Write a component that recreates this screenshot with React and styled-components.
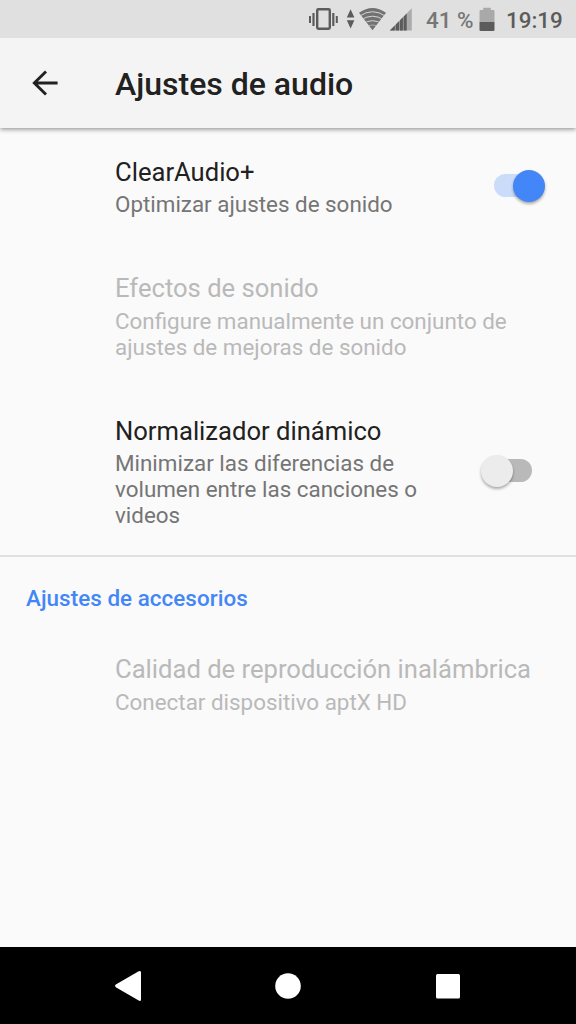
import React, { useState } from "react";
import styled, { createGlobalStyle } from "styled-components";

const GlobalStyle = createGlobalStyle`
  * {
    box-sizing: border-box;
  }

  body {
    margin: 0;
    font-family: Roboto, "Liberation Sans", sans-serif;
    background: #fafafa;
  }
`;

const Screen = styled.div`
  display: flex;
  flex-direction: column;
  width: 576px;
  height: 1024px;
  overflow: hidden;
  background: #fafafa;
`;

const StatusBar = styled.div`
  display: flex;
  flex: none;
  align-items: center;
  justify-content: flex-end;
  height: 38px;
  padding-right: 13px;
  background: #e0e0e0;
`;

const StatusIcons = styled.svg`
  flex: none;
  width: 106px;
  height: 38px;
`;

const BatteryIcon = styled.svg`
  flex: none;
  width: 16px;
  height: 38px;
  margin: 0 11px 0 6px;
`;

const StatusText = styled.span`
  width: ${props => props.$width};
  margin-left: ${props => props.$left || 0};
  color: ${props => props.$color};
  font-size: 22.4px;
  font-weight: 500;
  line-height: 26px;
  white-space: nowrap;
  padding-top: 1px;
`;

const AppBar = styled.header`
  display: flex;
  flex: none;
  align-items: center;
  height: 90px;
  padding-left: 25px;
  background: #f4f4f4;
  box-shadow: 0 1px 5px rgba(0, 0, 0, 0.48);
  clip-path: inset(0 0 -12px 0);
  z-index: 1;
`;

const BackButton = styled.button`
  display: flex;
  width: 90px;
  padding: 0;
  border: 0;
  background: none;
`;

const Title = styled.h1`
  margin: 1px 0 0;
  color: #212121;
  font-size: 32px;
  font-weight: 500;
  line-height: 38px;
`;

const List = styled.main`
  flex: 1;
  padding-top: 1px;
`;

const Row = styled.div`
  display: flex;
  align-items: center;
  height: ${props => props.$height}px;
  padding: 0 31px 0 115px;
`;

const RowText = styled.div`
  flex: 1;
`;

const RowTitle = styled.div`
  color: ${props => (props.$disabled ? "#b9b9b9" : "#212121")};
  font-size: 25.6px;
  line-height: 30px;
  white-space: nowrap;
`;

const Summary = styled.div`
  width: ${props => props.$width || 430}px;
  margin-top: ${props => (props.$disabled ? 5 : 4)}px;
  color: ${props => (props.$disabled ? "#b9b9b9" : "#757575")};
  font-size: 22.4px;
  line-height: 26px;
`;

const Divider = styled.div`
  height: 2px;
  margin-top: -1px;
  background: #e0e0e0;
`;

const Category = styled.h2`
  margin: 28px 0 16px 26px;
  color: #4286f8;
  font-size: 22.4px;
  font-weight: 500;
  line-height: 26px;
  letter-spacing: 0.05px;
`;

const Switch = styled.button`
  display: flex;
  flex: none;
  width: 64px;
  padding: 0 0 3px;
  border: 0;
  background: none;
`;

const Track = styled.span`
  display: flex;
  align-items: center;
  justify-content: ${props => (props.$on ? "flex-end" : "flex-start")};
  width: 38px;
  height: 23px;
  margin-left: 13px;
  border-radius: 12px;
  background: ${props => (props.$on ? "#cbdcfb" : "#b9b9b9")};
`;

const Thumb = styled.span`
  flex: none;
  width: 32px;
  height: 32px;
  margin: ${props => (props.$on ? "0 -13px 0 0" : "0 0 0 -13px")};
  border-radius: 50%;
  background: ${props => (props.$on ? "#4286f8" : "#ececec")};
  box-shadow: 0 2px 3px rgba(0, 0, 0, 0.32);
`;

const NavBar = styled.nav`
  display: flex;
  flex: none;
  align-items: center;
  justify-content: center;
  gap: 128px;
  height: 77px;
  background: #000;
`;

const NavButton = styled.button`
  display: flex;
  width: 32px;
  height: 32px;
  padding: 0;
  border: 0;
  background: none;
`;

function StatusBarIcons() {
  return (
    <StatusIcons viewBox="308 0 106 38">
      <g fill="#5b5b5b">
        <path d="M309 16h2v7h-2zM312.4 13h2.2v13h-2.2zM332.2 13h2.2v13h-2.2zM335.8 16h2v7h-2z" />
        <path d="M346.8 17.6L350.6 9.3 354.4 17.6zM346.8 20.2h7.6L350.6 28.6z" />
      </g>
      <rect x="317.2" y="9.2" width="12.6" height="19.6" rx="1.2" fill="none" stroke="#5b5b5b" strokeWidth="2.4" />
      <clipPath id="wifi">
        <path d="M359 12.8Q372.5 3.2 386 12.8L372.5 30.2z" />
      </clipPath>
      <g clipPath="url(#wifi)">
        <path d="M359 6h27v25h-27z" fill="#727272" />
        <g fill="none" stroke="#d6d6d6" strokeWidth="1">
          <path d="M359.5 16.2Q372.5 7.2 385.5 16.2" />
          <path d="M361 20Q372.5 12.4 384 20" />
          <path d="M363 23.8Q372.5 17.6 382 23.8" />
          <path d="M365 27.4Q372.5 22.6 380 27.4" strokeWidth=".6" />
        </g>
      </g>
      <path d="M407 13.1L411.8 8.2v22.2H407z" fill="#ababab" />
      <path d="M389.8 30.4L407 13.2v17.2z" fill="#999" />
      <path d="M389.8 30.4l5-5v5zM395.8 24.4l3.2-3.2v9.2h-3.2zM400 20.2l2.9-2.9v13.1H400zM403.8 16.4l2.8-2.8v16.8h-2.8z" fill="#5b5b5b" />
    </StatusIcons>
  );
}

function Setting({ title, summary, height, width, disabled, children }) {
  return (
    <Row $height={height}>
      <RowText>
        <RowTitle $disabled={disabled}>{title}</RowTitle>
        <Summary $disabled={disabled} $width={width}>{summary}</Summary>
      </RowText>
      {children}
    </Row>
  );
}

function Toggle({ initial, label }) {
  const [on, setOn] = useState(initial);

  return (
    <Switch role="switch" aria-checked={on} aria-label={label} onClick={() => setOn(!on)}>
      <Track $on={on}>
        <Thumb $on={on} />
      </Track>
    </Switch>
  );
}

export default function App() {
  return (
    <Screen>
      <GlobalStyle />
      <StatusBar>
        <StatusBarIcons />
        <StatusText $width="47px" $left="12px" $color="#767676">41 %</StatusText>
        <BatteryIcon viewBox="0 0 16 38">
          <path d="M0.5 11.2q0-1.3 1.3-1.3h2.4V7.8h7.6v2.1h2.4q1.3 0 1.3 1.3V22H.5z" fill="#a9a9a9" />
          <path d="M.5 22h15v7.7q0 1.3-1.3 1.3H1.8Q.5 31 .5 29.7z" fill="#5b5b5b" />
        </BatteryIcon>
        <StatusText $width="57px" $color="#5b5b5b">19:19</StatusText>
      </StatusBar>
      <AppBar>
        <BackButton aria-label="Atrás">
          <svg width="40" height="40" viewBox="0 0 40 40" fill="none" stroke="#212121" strokeWidth="2.9">
            <path d="M32.6 20H9M21 8.5L9.3 20 21 31.5" />
          </svg>
        </BackButton>
        <Title>Ajustes de audio</Title>
      </AppBar>
      <List>
        <Setting height={116} title="ClearAudio+" summary="Optimizar ajustes de sonido" width={360}>
          <Toggle initial={true} label="ClearAudio+" />
        </Setting>
        <Setting
          height={143}
          disabled
          title="Efectos de sonido"
          summary="Configure manualmente un conjunto de ajustes de mejoras de sonido"
        />
        <Setting
          height={168}
          title="Normalizador dinámico"
          summary="Minimizar las diferencias de volumen entre las canciones o videos"
          width={320}
        >
          <Toggle initial={false} label="Normalizador dinámico" />
        </Setting>
        <Divider />
        <Category>Ajustes de accesorios</Category>
        <Setting
          height={115}
          disabled
          title="Calidad de reproducción inalámbrica"
          summary="Conectar dispositivo aptX HD"
        />
      </List>
      <NavBar>
        <NavButton aria-label="Atrás">
          <svg width="32" height="32" viewBox="0 0 32 32" fill="#fff">
            <path d="M3.8 14.6L26.7 1.2Q29 .2 29 2.4v27q0 2.2-2.3 1.2L3.8 17.2q-1.8-1.3 0-2.6z" />
          </svg>
        </NavButton>
        <NavButton aria-label="Inicio">
          <svg width="32" height="32" viewBox="0 0 32 32" fill="#fff">
            <circle cx="16" cy="16" r="12.8" />
          </svg>
        </NavButton>
        <NavButton aria-label="Recientes">
          <svg width="32" height="32" viewBox="0 0 32 32" fill="#fff">
            <rect x="4" y="4" width="24" height="24.5" rx="1.5" />
          </svg>
        </NavButton>
      </NavBar>
    </Screen>
  );
}
